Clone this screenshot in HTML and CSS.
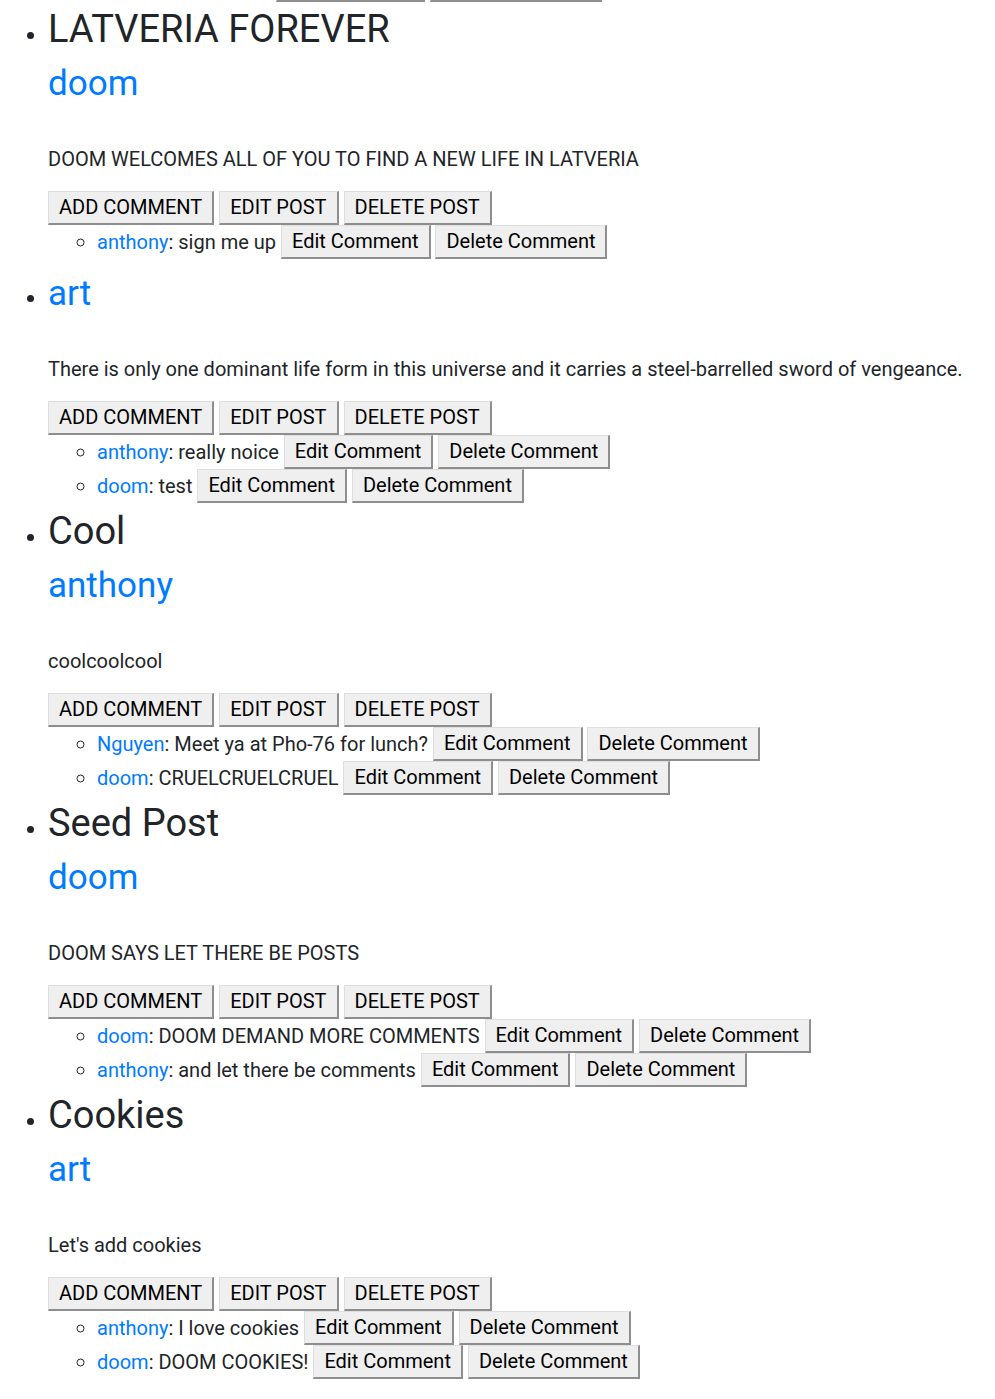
FILE: index.html
```html
<!DOCTYPE html>
<html lang="en">
<head>
<meta charset="utf-8">
<title>Posts</title>
<link rel="stylesheet" href="styles.css">
</head>
<body>
<ul class="feed">
  <li class="post post-prev">
    <ul class="comments">
      <li class="comment"><a class="comment-author" href="#">doom</a>: DOOM WINS <button class="btn">Edit Comment</button> <button class="btn">Delete Comment</button></li>
    </ul>
  </li>

  <li class="post">
    <h2 class="post-title">LATVERIA FOREVER</h2>
    <h3 class="post-author"><a href="#">doom</a></h3>
    <p class="post-body">DOOM WELCOMES ALL OF YOU TO FIND A NEW LIFE IN LATVERIA</p>
    <div class="post-actions"><button class="btn">ADD COMMENT</button> <button class="btn">EDIT POST</button> <button class="btn">DELETE POST</button></div>
    <ul class="comments">
      <li class="comment"><a class="comment-author" href="#">anthony</a>: sign me up <button class="btn">Edit Comment</button> <button class="btn">Delete Comment</button></li>
    </ul>
  </li>

  <li class="post">
    <h2 class="post-title"></h2>
    <h3 class="post-author"><a href="#">art</a></h3>
    <p class="post-body">There is only one dominant life form in this universe and it carries a steel-barrelled sword of vengeance.</p>
    <div class="post-actions"><button class="btn">ADD COMMENT</button> <button class="btn">EDIT POST</button> <button class="btn">DELETE POST</button></div>
    <ul class="comments">
      <li class="comment"><a class="comment-author" href="#">anthony</a>: really noice <button class="btn">Edit Comment</button> <button class="btn">Delete Comment</button></li>
      <li class="comment"><a class="comment-author" href="#">doom</a>: test <button class="btn">Edit Comment</button> <button class="btn">Delete Comment</button></li>
    </ul>
  </li>

  <li class="post">
    <h2 class="post-title">Cool</h2>
    <h3 class="post-author"><a href="#">anthony</a></h3>
    <p class="post-body">coolcoolcool</p>
    <div class="post-actions"><button class="btn">ADD COMMENT</button> <button class="btn">EDIT POST</button> <button class="btn">DELETE POST</button></div>
    <ul class="comments">
      <li class="comment"><a class="comment-author" href="#">Nguyen</a>: Meet ya at Pho-76 for lunch? <button class="btn">Edit Comment</button> <button class="btn">Delete Comment</button></li>
      <li class="comment"><a class="comment-author" href="#">doom</a>: CRUELCRUELCRUEL <button class="btn">Edit Comment</button> <button class="btn">Delete Comment</button></li>
    </ul>
  </li>

  <li class="post">
    <h2 class="post-title">Seed Post</h2>
    <h3 class="post-author"><a href="#">doom</a></h3>
    <p class="post-body">DOOM SAYS LET THERE BE POSTS</p>
    <div class="post-actions"><button class="btn">ADD COMMENT</button> <button class="btn">EDIT POST</button> <button class="btn">DELETE POST</button></div>
    <ul class="comments">
      <li class="comment"><a class="comment-author" href="#">doom</a>: DOOM DEMAND MORE COMMENTS <button class="btn">Edit Comment</button> <button class="btn">Delete Comment</button></li>
      <li class="comment"><a class="comment-author" href="#">anthony</a>: and let there be comments <button class="btn">Edit Comment</button> <button class="btn">Delete Comment</button></li>
    </ul>
  </li>

  <li class="post">
    <h2 class="post-title">Cookies</h2>
    <h3 class="post-author"><a href="#">art</a></h3>
    <p class="post-body">Let's add cookies</p>
    <div class="post-actions"><button class="btn">ADD COMMENT</button> <button class="btn">EDIT POST</button> <button class="btn">DELETE POST</button></div>
    <ul class="comments">
      <li class="comment"><a class="comment-author" href="#">anthony</a>: I love cookies <button class="btn">Edit Comment</button> <button class="btn">Delete Comment</button></li>
      <li class="comment"><a class="comment-author" href="#">doom</a>: DOOM COOKIES! <button class="btn">Edit Comment</button> <button class="btn">Delete Comment</button></li>
    </ul>
  </li>
</ul>
</body>
</html>
```
FILE: styles.css
```css
html, body {
  margin: 0;
  padding: 0;
  background: #fff;
}

body {
  font-family: Roboto, "Liberation Sans", sans-serif;
  font-size: 20px;
  line-height: 30px;
  color: #212529;
}

a {
  color: #007bff;
  text-decoration: none;
}

.feed {
  margin: -32px 0 0;
  padding: 0 0 0 48px;
  list-style: disc;
}

.post::marker {
  font-size: 24px;
  color: #212529;
}

.post {
  padding-top: 3px;
}

.post-prev {
  padding-top: 0;
}

.post-title {
  margin: 0 0 10px;
  font-size: 38px;
  line-height: 48px;
  font-weight: 400;
  color: #212529;
}

.post-author {
  margin: 0 0 39px;
  font-size: 35px;
  line-height: 42px;
  font-weight: 400;
}

.post-body {
  margin: 0 0 17px;
  white-space: nowrap;
}

.post-actions {
  height: 34px;
  line-height: 34px;
}

.comments {
  margin: 0 0 1px;
  padding: 0 0 0 49px;
  list-style: circle;
}

.post-prev .comments {
  margin-bottom: 0;
}

.comment {
  line-height: 34px;
  height: 34px;
  white-space: nowrap;
}

.comment::marker {
  font-size: 22px;
  color: #212529;
}

.btn {
  box-sizing: border-box;
  height: 34px;
  margin: 0;
  padding: 0 10px;
  font-family: Roboto, "Liberation Sans", sans-serif;
  font-size: 20px;
  line-height: 31px;
  color: #000;
  background: #efefef;
  border-style: solid;
  border-width: 1px 2px 2px 1px;
  border-color: #dedede #8e8e8e #8e8e8e #dedede;
  border-radius: 0;
  vertical-align: top;
  cursor: pointer;
}
```
